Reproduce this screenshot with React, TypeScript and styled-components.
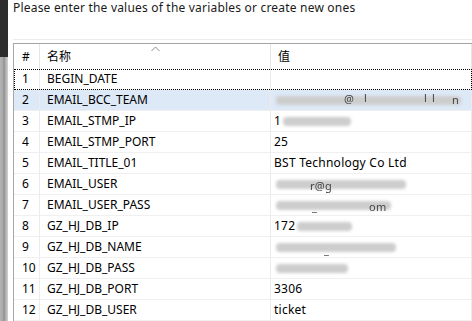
import * as React from 'react';
import styled, { createGlobalStyle } from 'styled-components';

const GlobalStyle = createGlobalStyle`
    html, body {
        margin: 0;
        padding: 0;
        background: #ffffff;
        overflow: hidden;
    }
    body {
        font-family: "Noto Sans", "Noto Sans CJK SC", sans-serif;
        font-size: 12px;
        color: #000;
    }
`;

const Page = styled.div`
    display: flex;
    width: 472px;
    height: 321px;
    overflow: hidden;
`;

const EdgeStrip = styled.div`
    flex: 0 0 8px;
    background:
        linear-gradient(to bottom, #2d2d2d 0, #2d2d2d 57px, transparent 57px),
        linear-gradient(to right, #b4b4b4 0, #a8a8a8 3px, #8c8c8c 4px, #b8b8b8 6px, #d0d0d0 8px);
`;

const Main = styled.div`
    flex: 1;
    display: flex;
    flex-direction: column;
    padding-left: 5px;
    min-width: 0;
`;

const Prompt = styled.div`
    height: 16px;
    line-height: 16px;
    white-space: nowrap;
    letter-spacing: 0.2px;
    color: #1a1a1a;
`;

const Spacer = styled.div`
    height: 27px;
    border-bottom: 1px solid #ececec;
`;

const Table = styled.div`
    margin-top: 3px;
    border-top: 1px solid #a3a3a3;
    border-left: 1px solid #a8a8a8;
    display: flex;
    flex-direction: column;
`;

const Row = styled.div<{ selected?: boolean; focused?: boolean }>`
    display: grid;
    grid-template-columns: 26px 231px 1fr;
    height: 21px;
    background: ${({ selected }) => (selected ? '#dde9f6' : '#fff')};
    outline: ${({ focused }) => (focused ? '1px dotted #000' : 'none')};
    outline-offset: -1px;
    position: relative;
`;

const HeaderRow = styled(Row)`
    height: 25px;
`;

const Cell = styled.div<{ pad?: number; wide?: boolean }>`
    display: flex;
    align-items: center;
    padding-left: ${({ pad }) => pad ?? 7}px;
    border-right: 1px solid #ececec;
    border-bottom: 1px solid #f0f0f0;
    white-space: nowrap;
    overflow: hidden;
    line-height: 20px;
    letter-spacing: ${({ wide }) => (wide ? '0.25px' : '0')};
`;

const HeadCell = styled(Cell)`
    border-bottom: none;
    border-right-color: #e6e6e6;
    position: relative;
`;

const SortArrow = styled.svg`
    position: absolute;
    left: 111px;
    top: 2px;
`;

const Smudge = styled.span<{ w: number; tone?: string }>`
    display: inline-block;
    width: ${({ w }) => w}px;
    height: 9px;
    border-radius: 4px;
    background: ${({ tone }) => tone ?? '#cdcdcd'};
    filter: blur(1.6px);
    margin-left: 2px;
`;

const Frag = styled.span<{ x: number; y: number }>`
    position: absolute;
    left: ${({ x }) => x}px;
    top: ${({ y }) => y}px;
    color: #444;
    filter: blur(0.6px);
    font-size: 11px;
    line-height: 11px;
`;

const ValueBox = styled.span`
    position: relative;
    display: inline-flex;
    align-items: center;
`;

type Item = { name: string; value?: string; blur?: number; frags?: { t: string; x: number; y: number }[] };

const items: Item[] = [
    { name: 'BEGIN_DATE' },
    { name: 'EMAIL_BCC_TEAM', blur: 185, frags: [{ t: '@', x: 70, y: -3 }, { t: 'l', x: 90, y: -4 }, { t: 'l', x: 150, y: -4 }, { t: 'l', x: 158, y: -4 }, { t: 'n', x: 178, y: -2 }] },
    { name: 'EMAIL_STMP_IP', value: '1', blur: 68 },
    { name: 'EMAIL_STMP_PORT', value: '25' },
    { name: 'EMAIL_TITLE_01', value: 'BST Technology Co Ltd' },
    { name: 'EMAIL_USER', blur: 130, frags: [{ t: 'r@g', x: 36, y: 0 }] },
    { name: 'EMAIL_USER_PASS', blur: 115, frags: [{ t: '_', x: 38, y: 0 }, { t: 'om', x: 95, y: 0 }] },
    { name: 'GZ_HJ_DB_IP', value: '172', blur: 55 },
    { name: 'GZ_HJ_DB_NAME', blur: 120, frags: [{ t: '_', x: 50, y: 1 }] },
    { name: 'GZ_HJ_DB_PASS', blur: 72 },
    { name: 'GZ_HJ_DB_PORT', value: '3306' },
    { name: 'GZ_HJ_DB_USER', value: 'ticket' },
];

export default function App() {
    return (
        <Page>
            <GlobalStyle />
            <EdgeStrip />
            <Main>
                <Prompt>Please enter the values of the variables or create new ones</Prompt>
                <Spacer />
                <Table>
                    <HeaderRow>
                        <HeadCell pad={8}>#</HeadCell>
                        <HeadCell pad={7}>
                            名称
                            <SortArrow width="9" height="6" viewBox="0 0 9 6">
                                <path d="M0.5 5 L4.5 1 L8.5 5" fill="none" stroke="#8a8a8a" strokeWidth="1" />
                            </SortArrow>
                        </HeadCell>
                        <HeadCell pad={7}>值</HeadCell>
                    </HeaderRow>
                    {items.map((it, i) => (
                        <Row key={it.name} selected={i === 1} focused={i === 0}>
                            <Cell pad={8}>{i + 1}</Cell>
                            <Cell>{it.name}</Cell>
                            <Cell pad={3} wide>
                                <ValueBox>
                                    {it.value}
                                    {it.blur ? <Smudge w={it.blur} /> : null}
                                    {it.frags?.map((f, k) => (
                                        <Frag key={k} x={f.x} y={f.y}>{f.t}</Frag>
                                    ))}
                                </ValueBox>
                            </Cell>
                        </Row>
                    ))}
                </Table>
            </Main>
        </Page>
    );
}
